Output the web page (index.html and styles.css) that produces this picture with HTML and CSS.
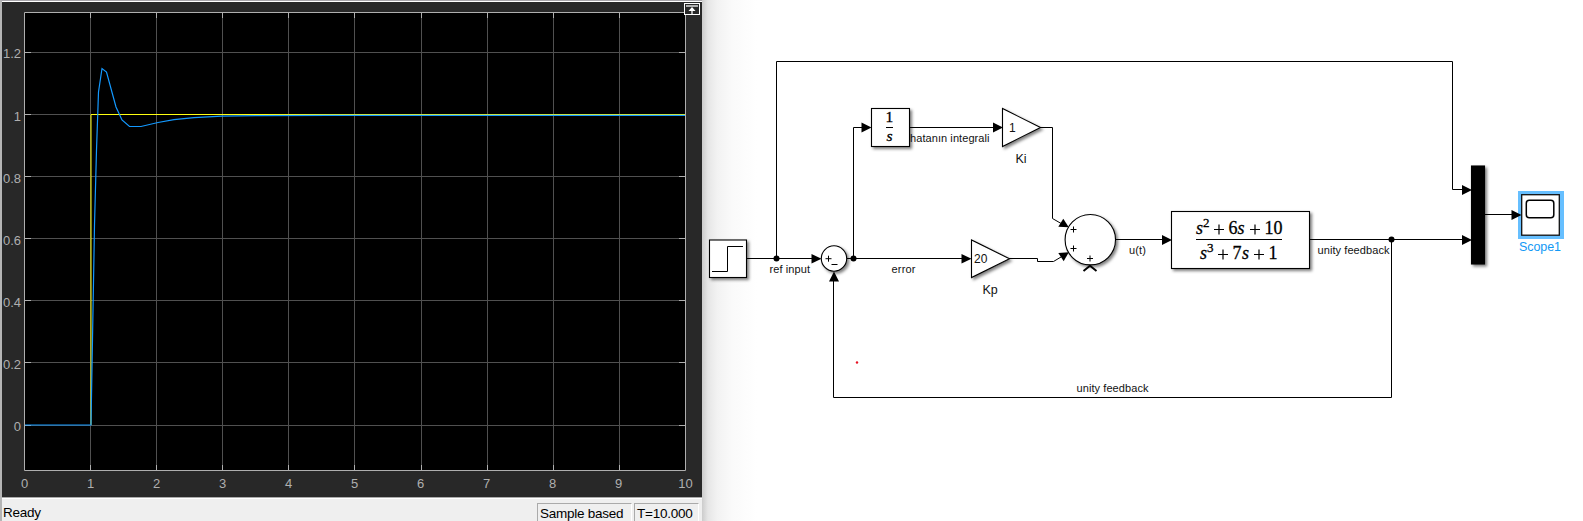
FILE: index.html
```html
<!DOCTYPE html>
<html lang="en">
<head>
<meta charset="utf-8">
<title>Scope1</title>
<link rel="stylesheet" href="styles.css">
</head>
<body>
<main class="workspace">
<section class="scope">
<svg class="plot" width="700" height="495" viewBox="2 2 700 495">
<rect class="axes-bg" x="24.5" y="12.5" width="661" height="458"/>
<path class="grid" d="M90.500 13V470M156.500 13V470M222.500 13V470M288.500 13V470M354.500 13V470M421.500 13V470M487.500 13V470M553.500 13V470M619.500 13V470M25 52.500H685M25 114.500H685M25 176.500H685M25 238.500H685M25 300.500H685M25 362.500H685M25 425.500H685"/>
<path class="axis" d="M24.500 12.500H685.500V470.500H24.500Z"/>
<path class="axis" d="M90.500 13v5m0 447v5M156.500 13v5m0 447v5M222.500 13v5m0 447v5M288.500 13v5m0 447v5M354.500 13v5m0 447v5M421.500 13v5m0 447v5M487.500 13v5m0 447v5M553.500 13v5m0 447v5M619.500 13v5m0 447v5M25 52.500h6m648 0h6M25 114.500h6m648 0h6M25 176.500h6m648 0h6M25 238.500h6m648 0h6M25 300.500h6m648 0h6M25 362.500h6m648 0h6M25 425.500h6m648 0h6"/>
<path class="reference" d="M91 425V114.500H685"/>
<path class="response" d="M25 425H91L94.500 225L96.500 150L98.500 92L102 68.500L106.500 72L116 107L122 120L129.500 126.500H141L158 122.500L174 119.700L194 117.600L222 116.200L260 115.600L330 115.300H685"/>
<g class="ticks">
<text x="21" y="58">1.2</text><text x="21" y="121">1</text><text x="21" y="183">0.8</text><text x="21" y="245">0.6</text><text x="21" y="307">0.4</text><text x="21" y="369">0.2</text><text x="21" y="431">0</text>
</g>
<g class="ticks ticks-x">
<text x="24.500" y="488">0</text><text x="90.500" y="488">1</text><text x="156.500" y="488">2</text><text x="222.500" y="488">3</text><text x="288.500" y="488">4</text><text x="354.500" y="488">5</text><text x="420.500" y="488">6</text><text x="486.500" y="488">7</text><text x="552.500" y="488">8</text><text x="618.500" y="488">9</text><text x="685.500" y="488">10</text>
</g>
<rect class="maximize" x="684.500" y="3.500" width="15" height="11"/>
<path class="maximize-bar" d="M686 6H698M692 10V14"/>
<path class="maximize-arrow" d="M688.500 11L692 7L695.500 11Z"/>
</svg>
<footer class="status">
<span class="ready">Ready</span>
<span class="cell sample">Sample based</span>
<span class="cell time">T=10.000</span>
</footer>
</section>
<section class="model">
<svg class="diagram" width="881" height="521" viewBox="702 0 881 521">
<defs>
<filter id="shadow" x="-30%" y="-30%" width="170%" height="170%"><feDropShadow dx="2" dy="2" stdDeviation="1.500" flood-color="#000" flood-opacity=".5"/></filter>
</defs>
<g class="wire">
<path d="M747 258.500H813M776.500 258.500V61.500H1452.500V189.500H1463M847 258.500H963M853.500 258.500V127.500H863M910 127.500H994M1041 127.500H1052.500V218.500L1062 224M1009 258.500H1037.500V261.500H1053.500L1061 257M1116 239.500H1163M1310 239.500H1463M1391.500 239.500V397.500H833.500V281M1485 214.500H1513"/>
</g>
<g class="block" filter="url(#shadow)">
<rect x="709.500" y="240" width="37" height="37.500"/>
<circle cx="834" cy="258.500" r="12.700"/>
<rect x="871.500" y="108.500" width="38" height="38"/>
<path d="M1002.500 108.500V146.500L1040.500 127.500Z"/>
<path d="M971.500 240V277.500L1009.500 258.700Z"/>
<circle cx="1090.300" cy="239.700" r="25.200"/>
<rect x="1171.500" y="211.500" width="138" height="57"/>
<rect class="mux" x="1471.500" y="166" width="13" height="98"/>
</g>
<rect class="selection" x="1518" y="191" width="46" height="48"/>
<rect class="scope-box" x="1521.700" y="194.700" width="37.600" height="40.500"/>
<rect class="screen" x="1526.300" y="200.300" width="27.500" height="17.400" rx="3"/>
<path class="glyph" d="M712 271.500H727.500V246.500H743"/>
<g class="arrow">
<path d="M811.500 254L821.500 258.800L811.500 263.500Z"/>
<path d="M961.500 254L971.500 258.800L961.500 263.500Z"/>
<path d="M861.500 122.500L871.500 127.500L861.500 132.500Z"/>
<path d="M993 122.500L1003 127.500L993 132.500Z"/>
<path d="M1162 235L1172 240L1162 245Z"/>
<path d="M1462 185L1472 190L1462 195Z"/>
<path d="M1462 235L1472 240L1462 245Z"/>
<path d="M1511.500 210L1521.500 215L1511.500 220Z"/>
<path d="M829 281.500L834 271.500L839 281.500Z"/>
<path d="M1063.300 218.700L1068.800 227.300L1058.300 226.700Z"/>
<path d="M1058.300 253L1068.800 252.200L1063.700 261.300Z"/>
<circle cx="776.500" cy="258.500" r="3"/><circle cx="853.500" cy="258.500" r="3"/><circle cx="1391.500" cy="239.500" r="3"/>
</g>
<path class="glyph" d="M825.500 258.700h6M828.500 255.700v6M831.500 264.500h6M1070.500 229.500h6M1073.500 226.500v6M1070.500 248.500h6M1073.500 245.500v6M1087 258.500h6M1090 255.500v6"/>
<path class="chevron" d="M1083.500 271L1090 265.800L1096.500 271"/>
<g class="label">
<text x="769.500" y="273" textLength="40.500">ref input</text>
<text x="891.500" y="273" textLength="24">error</text>
<text x="910" y="142" textLength="79.500">hatanın integrali</text>
<text x="1129" y="254" textLength="17">u(t)</text>
<text x="1317.500" y="254" textLength="72">unity feedback</text>
<text x="1076.500" y="392" textLength="72">unity feedback</text>
</g>
<g class="name">
<text x="1015.500" y="163">Ki</text>
<text x="982.500" y="294">Kp</text>
<text class="selected" x="1519" y="251" textLength="42">Scope1</text>
</g>
<g class="gain"><text x="1009" y="131.700">1</text><text x="974" y="262.700">20</text></g>
<g class="math">
<text class="small" x="885.500" y="122">1</text>
<text class="small var" x="886.500" y="141">s</text>
<path d="M886 127.500H893M1196 239.500H1282"/>
<text class="var" x="1196" y="234">s</text><text class="sup" x="1203" y="226.500">2</text><path class="plus" d="M1214 229.500h10m-5 -5v10M1250 229.500h10m-5 -5v10"/><text x="1228.500" y="234">6</text><text class="var" x="1237.500" y="234">s</text><text x="1264.500" y="234">10</text>
<text class="var" x="1200" y="259">s</text><text class="sup" x="1207" y="251.500">3</text><path class="plus" d="M1218 254.500h10m-5 -5v10M1254 254.500h10m-5 -5v10"/><text x="1232.500" y="259">7</text><text class="var" x="1242" y="259">s</text><text x="1268.500" y="259">1</text>
</g>
<circle class="marker" cx="857" cy="362.500" r="1.200"/>
</svg>
</section>
</main>
</body>
</html>
```
FILE: styles.css
```css
body { margin: 0; background: #fff; font-family: "Liberation Sans", Arial, sans-serif; }
.workspace { display: flex; width: 1583px; height: 521px; overflow: hidden; }
.scope { box-sizing: border-box; width: 702px; height: 521px; display: flex; flex-direction: column; border-left: 2px solid #b5b5b5; border-top: 1px solid #a8a6ab; background: #efefef; }
.plot { display: block; flex: none; background: #282828; border-top: 1px solid #fff; }
.axes-bg { fill: #000; }
.grid { fill: none; stroke: #505050; }
.axis { fill: none; stroke: #afafaf; }
.reference { fill: none; stroke: #ffff11; }
.response { fill: none; stroke: #1399ff; stroke-width: 1.2; }
.ticks { fill: #afafaf; font-size: 13px; text-anchor: end; }
.ticks-x { text-anchor: middle; }
.maximize { fill: #282828; stroke: #fff; }
.maximize-bar { stroke: #afafaf; stroke-width: 2; }
.maximize-arrow { fill: #fff; }
.status { flex: 1; display: flex; box-sizing: border-box; border-top: 1px solid #aaa; box-shadow: inset 0 1px #fff; padding: 5px 3px 0 1px; gap: 2px; font-size: 13.5px; letter-spacing: -.25px; line-height: 20px; white-space: nowrap; }
.ready { flex: 1; }
.cell { box-sizing: border-box; height: 24px; border: 1px solid #aaa; border-right-color: #fff; padding-left: 2px; }
.sample { width: 95px; }
.time { width: 65px; }
.model { width: 881px; background: linear-gradient(90deg, #ccc 0, #e6e6e6 6px, #f2f2f2 15px, #fafafa 30px, #fff 55px); }
.diagram { display: block; }
.wire, .glyph { fill: none; stroke: #000; stroke-width: 1; }
.block { fill: #fff; stroke: #000; stroke-width: 1.1; }
.mux { fill: #000; }
.selection { fill: #66bfff; }
.scope-box { fill: #fff; stroke: #111; stroke-width: 1.3; }
.screen { fill: #fff; stroke: #000; stroke-width: 1.5; }
.arrow { fill: #000; }
.chevron { fill: none; stroke: #000; stroke-width: 2; }
.label { font-size: 11px; fill: #111; }
.name { font-size: 12.5px; fill: #111; }
.name .selected { fill: #1299f5; }
.gain { font-size: 12px; fill: #111; }
.math { font-family: "Liberation Serif", "Times New Roman", serif; font-size: 18px; fill: #000; }
.math text { stroke: #000; stroke-width: .3; }
.math path { stroke: #000; }
.math .plus { stroke-width: 1.2; }
.var { font-style: italic; }
.math .sup { font-size: 13px; }
.math .small { font-size: 15.5px; }
.marker { fill: #e81123; }
```
